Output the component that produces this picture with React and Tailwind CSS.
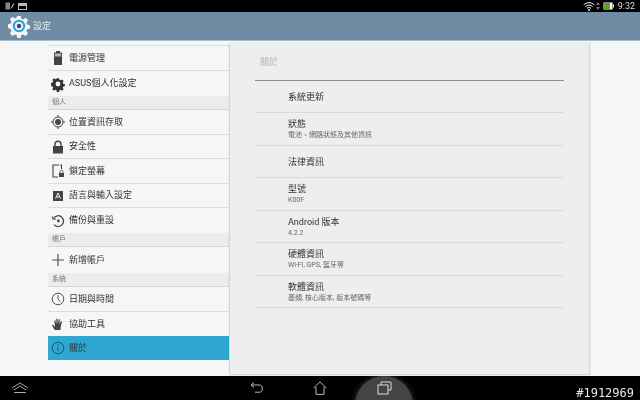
const CJK = "font-['Roboto','Noto_Sans_CJK_TC','Noto_Sans_CJK_SC',sans-serif]";

const IconBattery = () => (
  <svg width="14" height="16" viewBox="0 0 14 16">
    <path d="M5 1h4v1.500h2V15H3V2.500h2z" fill="#444" />
    <rect x="4" y="3.500" width="6" height="3" fill="#bbb" />
  </svg>
);
const IconGear = () => (
  <svg width="16" height="16" viewBox="0 0 16 16">
    <path
      fill="#333"
      d="M6.600 1h2.800l.4 2 1.400.6 1.700-1.100 2 2-1.100 1.700.6 1.400 2 .4v2.800l-2 .4-.6 1.400 1.100 1.700-2 2-1.700-1.100-1.400.6-.4 2H6.600l-.4-2-1.400-.6-1.700 1.100-2-2 1.100-1.700-.6-1.400-2-.4V6.600l2-.4.6-1.400-1.100-1.700 2-2 1.700 1.100 1.400-.6z"
      transform="translate(1.400 1.400) scale(.82)"
    />
    <circle cx="8" cy="8" r="2.400" fill="#f5f6f7" />
  </svg>
);
const IconLocation = () => (
  <svg width="16" height="16" viewBox="0 0 16 16" fill="none" stroke="#444">
    <circle cx="8" cy="8" r="5" strokeWidth="1" />
    <circle cx="8" cy="8" r="3" fill="#444" stroke="none" />
    <path d="M8 1v2M8 13v2M1 8h2M13 8h2" strokeWidth="1" />
  </svg>
);
const IconLock = () => (
  <svg width="14" height="14" viewBox="0 0 14 14">
    <path d="M4 6V4.200a3 3 0 0 1 6 0V6" fill="none" stroke="#444" strokeWidth="1.400" />
    <rect x="2" y="6" width="10" height="7.500" fill="#444" />
  </svg>
);
const IconScreenLock = () => (
  <svg width="14" height="14" viewBox="0 0 14 14" fill="none">
    <path d="M8 1H2v12h5M9 1h1.500v4" stroke="#444" strokeWidth="1.100" />
    <rect x="8" y="9" width="5" height="4" fill="#444" />
    <path d="M9 9V7.800a1.500 1.500 0 0 1 3 0V9" stroke="#444" strokeWidth=".8" />
  </svg>
);
const IconLang = () => (
  <svg width="14" height="14" viewBox="0 0 14 14">
    <rect x="2" y="2" width="10" height="10" fill="#444" />
    <path d="M4.600 9.600 7 4l2.400 5.600M5.400 8h3.200" stroke="#eee" strokeWidth="1" fill="none" />
  </svg>
);
const IconBackup = () => (
  <svg width="14" height="14" viewBox="0 0 14 14" fill="none" stroke="#444">
    <path d="M2.600 4.200A5.400 5.400 0 1 1 3 10.600" strokeWidth="1.300" />
    <path d="M1.200 2.400 2 5.400l3-.6" strokeWidth="1" />
    <circle cx="7.400" cy="7" r="1.400" fill="#444" stroke="none" />
  </svg>
);
const IconPlus = () => (
  <svg width="14" height="14" viewBox="0 0 14 14" stroke="#555" strokeWidth="1.200">
    <path d="M7 1v12M1 7h12" />
  </svg>
);
const IconClock = () => (
  <svg width="14" height="14" viewBox="0 0 14 14" fill="none" stroke="#555" strokeWidth="1">
    <circle cx="7" cy="7" r="5.800" />
    <path d="M7 3.200V7l2.200 2.600" />
  </svg>
);
const IconHand = () => (
  <svg width="14" height="14" viewBox="0 0 14 14" fill="#444">
    <path d="M3.600 13 1 8.200l1-.5 2 2.300L3.400 3.400l1-.1.9 3.600V1.800h1.100l.4 5 1-4.800 1.100.2-.5 5.200 1.600-3.400 1 .4L9.900 9l-.5 4z" />
  </svg>
);
const IconInfo = () => (
  <svg width="14" height="14" viewBox="0 0 14 14" fill="none" stroke="#155a78" strokeWidth="1">
    <circle cx="7" cy="7" r="5.800" />
    <path d="M7 6v4.200M7 3.600v1.200" />
  </svg>
);

const menu = [
  { icon: <IconBattery />, label: "電源管理", h: "h-[25px]" },
  { icon: <IconGear />, label: "ASUS個人化設定", h: "h-[25px]", noLine: true },
  { header: "個人" },
  { icon: <IconLocation />, label: "位置資訊存取", h: "h-[25px]" },
  { icon: <IconLock />, label: "安全性", h: "h-[24px]" },
  { icon: <IconScreenLock />, label: "鎖定螢幕", h: "h-[25px]" },
  { icon: <IconLang />, label: "語言與輸入設定", h: "h-[24px]" },
  { icon: <IconBackup />, label: "備份與重設", h: "h-[25px]", noLine: true },
  { header: "帳戶" },
  { icon: <IconPlus />, label: "新增帳戶", h: "h-[26px]", noLine: true },
  { header: "系統" },
  { icon: <IconClock />, label: "日期與時間", h: "h-[25px]" },
  { icon: <IconHand />, label: "協助工具", h: "h-[24px]", noLine: true },
  { icon: <IconInfo />, label: "關於", h: "h-[24px]", active: true, noLine: true },
];

const about = [
  { title: "系統更新" },
  { title: "狀態", sub: "電池、網路狀態及其他資訊" },
  { title: "法律資訊" },
  { title: "型號", sub: "K00F" },
  { title: "Android 版本", sub: "4.2.2" },
  { title: "硬體資訊", sub: "Wi-Fi, GPS, 藍牙等" },
  { title: "軟體資訊", sub: "基頻, 核心版本, 版本號碼等" },
];

export default function App() {
  return (
    <div className={`w-[640px] h-[400px] flex flex-col overflow-hidden bg-[#f5f6f7] blur-[0.3px] ${CJK}`}>
      {/* status bar */}
      <div className="h-[12px] bg-black flex items-center px-[5px] gap-[3px] shrink-0">
        <svg width="10" height="8" viewBox="0 0 10 8" fill="none" stroke="#aaa">
          <rect x=".5" y=".5" width="4.500" height="7" fill="#888" stroke="none" />
          <path d="M6 6.500 9 1.500" strokeWidth="1.200" />
        </svg>
        <svg width="9" height="7" viewBox="0 0 9 7">
          <rect x=".5" y=".5" width="8" height="6" fill="none" stroke="#bbb" />
          <rect x="1" y="1" width="7" height="2" fill="#bbb" />
        </svg>
        <div className="ml-auto flex items-center">
          <svg width="12" height="9" viewBox="0 0 12 9" fill="none" stroke="#eee">
            <path d="M.7 2.800a7.600 7.600 0 0 1 10.600 0M2.400 4.600a5.200 5.200 0 0 1 7.200 0M4 6.300a3 3 0 0 1 4 0" strokeWidth="1" />
            <circle cx="6" cy="8" r="1" fill="#eee" stroke="none" />
          </svg>
          <svg width="4" height="8" viewBox="0 0 4 8" fill="#777" className="ml-[1px]">
            <path d="M2 0 4 3H0zM2 8 0 5h4z" />
          </svg>
          <svg width="11" height="8" viewBox="0 0 11 8" className="ml-[3px]">
            <rect x=".5" y=".5" width="9" height="7" fill="#fff" />
            <rect x="1" y="1" width="6" height="6" fill="#5aa51e" />
            <rect x="10" y="2.500" width="1" height="3" fill="#fff" />
          </svg>
          <span className="ml-[4px] text-[9px] leading-none text-[#ddd]">9:32</span>
        </div>
      </div>

      {/* action bar */}
      <div className="h-[29px] bg-[#6f8ba3] border-b border-[#a9bac8] flex items-center pl-[7px] gap-[2px] shrink-0">
        <svg width="24" height="24" viewBox="0 0 24 24">
          <path
            fill="#f4f6f8"
            d="M10 .6h4l.7 3.200 2 .8 2.800-1.800 2.800 2.800-1.800 2.800.8 2 3.200.7v4l-3.200.7-.8 2 1.800 2.800-2.800 2.800-2.800-1.800-2 .8-.7 3.200h-4l-.7-3.200-2-.8-2.800 1.800-2.800-2.800 1.800-2.800-.8-2L-.5 14v-4l3.200-.7.8-2-1.800-2.800 2.800-2.800 2.800 1.800 2-.8z"
            transform="translate(1.400 1.400) scale(.88)"
          />
          <circle cx="12" cy="12" r="6.200" fill="#2f9fd6" />
          <circle cx="12" cy="12" r="4.200" fill="#eef3f6" />
          <circle cx="12" cy="12" r="2.200" fill="#2c4a63" />
        </svg>
        <span className="text-[9px] leading-none text-[#e8edf1]">設定</span>
      </div>

      {/* content */}
      <div className="h-[335px] flex pl-[48px] shrink-0">
        <div className="w-[181px] pt-[4px] shrink-0">
          <div className="border-t border-[#dcdcdc]" />
          {menu.map((row) =>
            row.header ? (
              <div
                key={row.header}
                className="h-[14px] bg-[#ececec] border-b border-[#d6d6d6] pl-[4px] flex items-center text-[7px] leading-none text-[#777]"
              >
                {row.header}
              </div>
            ) : (
              <div
                key={row.label}
                className={`${row.h} flex items-center ${row.active ? "bg-[#2ea8d1]" : ""} ${
                  row.noLine ? "" : "border-b border-[#dcdcdc]"
                }`}
              >
                <div className="w-[20px] flex justify-center shrink-0">{row.icon}</div>
                <span className="ml-[1px] text-[9px] leading-none text-[#333]">{row.label}</span>
              </div>
            )
          )}
        </div>

        <div className="w-[361px] h-[332px] mt-[2px] bg-[#eeeeee] border-l border-r border-b border-[#d4d4d4] rounded-[1px] px-[25px] shadow-[0_0_2px_rgba(0,0,0,0.12)] shrink-0">
          <div className="h-[38px] flex items-center pl-[5px] pt-[2px] border-b border-[#8e8e8e] text-[9px] leading-none text-[#b4b4b4]">
            關於
          </div>
          {about.map((item, i) => (
            <div
              key={item.title}
              className={`${i % 2 === 0 ? "h-[32px]" : "h-[33px]"} pl-[33px] pt-[1px] flex flex-col justify-center border-b border-[#dadada]`}
            >
              <div className="text-[9px] leading-[11px] text-[#333]">{item.title}</div>
              {item.sub && <div className="text-[7px] leading-[9px] mt-[1px] text-[#666]">{item.sub}</div>}
            </div>
          ))}
        </div>
      </div>

      {/* nav bar */}
      <div className="relative flex-1 bg-black overflow-hidden">
        <div className="absolute left-[355px] top-0 w-[58px] h-[58px] rounded-full bg-[#444444] shadow-[0_0_6px_rgba(90,90,90,0.6)]" />
        <svg width="18" height="12" viewBox="0 0 18 12" fill="none" stroke="#aaa" className="absolute left-[11px] top-[6px]">
          <path d="M1 6 9 1l8 5M3 8l6-4 6 4M3 10.500h12" strokeWidth="1" />
        </svg>
        <svg width="14" height="14" viewBox="0 0 14 14" fill="none" stroke="#bbb" strokeWidth="1" className="absolute left-[250px] top-[5px]">
          <path d="M4 1.500 1 4l3 2.500M1.500 4h8a2.800 2.800 0 0 1 2.800 3.200v.8a2.800 2.800 0 0 1-2.800 3.200H5" />
        </svg>
        <svg width="14" height="14" viewBox="0 0 14 14" fill="none" stroke="#bbb" strokeWidth="1" className="absolute left-[313px] top-[5px]">
          <path d="M.6 7 7 .8 13.400 7M3 6v7.400h8V6" />
        </svg>
        <svg width="16" height="14" viewBox="0 0 16 14" fill="none" stroke="#ddd" strokeWidth="1" className="absolute left-[377px] top-[5px]">
          <rect x="1" y="4" width="10" height="9" />
          <path d="M4 4V1h10v8h-3" />
        </svg>
        <span className="absolute right-[6px] top-[10px] font-['DejaVu_Sans_Mono',monospace] text-[12px] leading-[14px] text-[#e8e8e8]">
          #1912969
        </span>
      </div>
    </div>
  );
}
